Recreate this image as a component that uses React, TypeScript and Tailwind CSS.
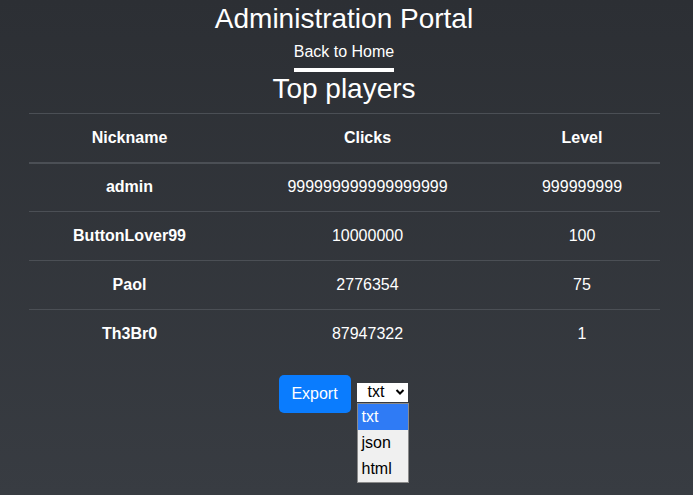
import React from "react";

const players = [
  { nickname: "admin", clicks: "999999999999999999", level: "999999999" },
  { nickname: "ButtonLover99", clicks: "10000000", level: "100" },
  { nickname: "Paol", clicks: "2776354", level: "75" },
  { nickname: "Th3Br0", clicks: "87947322", level: "1" },
];

export default function App() {
  return (
    <div
      className="min-h-[495px] w-full bg-gradient-to-b from-[#2c2f34] to-[#383c42] pr-[5px] text-white"
      style={{ fontFamily: '"Liberation Sans", Arial, sans-serif' }}
    >
      <div className="flex flex-col items-center">
        <h1 className="mt-[2px] text-[28px] leading-[34px]">Administration Portal</h1>
        <a className="mt-[6px] text-[16px] leading-[20px]">Back to Home</a>
        <div className="mt-[6px] h-[4px] w-[100px] bg-white" />
        <h2 className="text-[28px] leading-[34px]">Top players</h2>
      </div>

      {/* Players table */}
      <table className="mx-auto mt-[7px] w-[631px] border-collapse text-[16px]">
        <thead>
          <tr className="border-t border-[#4b4f55]">
            <th className="h-[49px] w-[202px] border-b-2 border-[#4b4f55] font-bold">Nickname</th>
            <th className="h-[49px] w-[274px] border-b-2 border-[#4b4f55] font-bold">Clicks</th>
            <th className="h-[49px] w-[155px] border-b-2 border-[#4b4f55] font-bold">Level</th>
          </tr>
        </thead>
        <tbody>
          {players.map((p, i) => (
            <tr key={p.nickname} className={i > 0 ? "border-t border-[#4b4f55]" : ""}>
              <td className="h-[49px] text-center font-bold">{p.nickname}</td>
              <td className="h-[49px] text-center">{p.clicks}</td>
              <td className="h-[49px] text-center">{p.level}</td>
            </tr>
          ))}
        </tbody>
      </table>

      {/* Export controls */}
      <div className="mt-[16px] flex items-start justify-center gap-[6px] pr-[2px]">
        <button className="h-[38px] w-[72px] rounded-[5px] bg-[#0a7cfe] text-[16px] text-white">
          Export
        </button>
        <div className="relative mt-[8px]">
          <div className="flex h-[19px] w-[51px] items-center justify-between bg-white pl-[11px] pr-[3px] text-[16px] leading-none text-black">
            <span>txt</span>
            <svg width="10" height="8" viewBox="0 0 10 8">
              <path d="M1.5 2 L5 5.5 L8.5 2" stroke="black" strokeWidth="2" fill="none" />
            </svg>
          </div>
          <div className="absolute left-0 top-[20px] w-[52px] border border-[#8a8a8a] bg-[#f0f0f0] text-[16px] leading-[26px] text-black">
            <div className="bg-[#2f7bf5] pl-[4px] text-white">txt</div>
            <div className="pl-[4px]">json</div>
            <div className="pl-[4px]">html</div>
          </div>
        </div>
      </div>
    </div>
  );
}
